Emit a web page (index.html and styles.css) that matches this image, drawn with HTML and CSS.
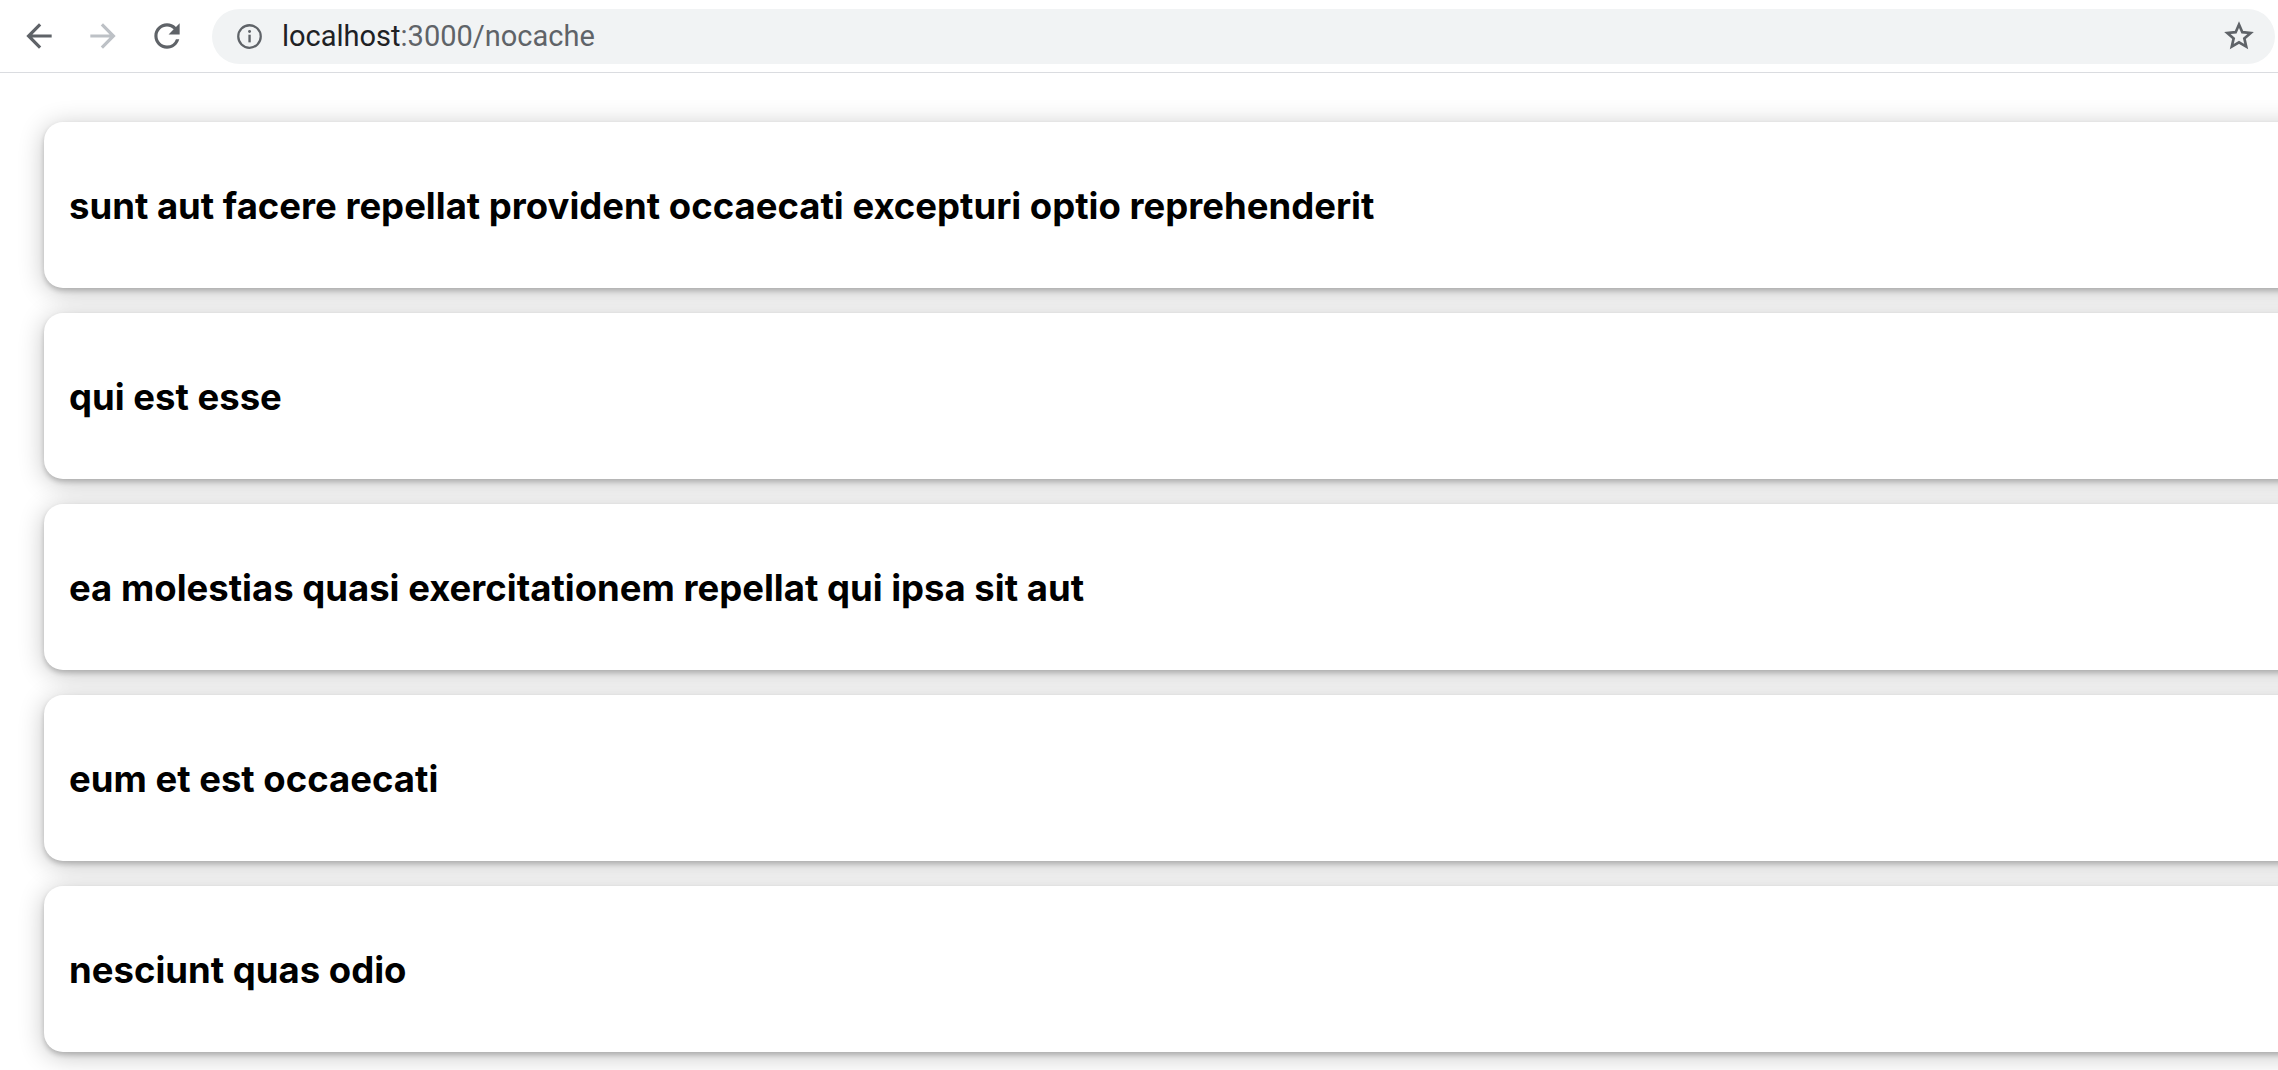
FILE: index.html
```html
<!DOCTYPE html>
<html lang="en">
<head>
<meta charset="utf-8">
<title>nocache</title>
<link rel="stylesheet" href="styles.css">
</head>
<body>
<header class="toolbar">
  <div class="nav">
    <span class="nav-btn">
      <svg viewBox="0 0 24 24" width="38" height="38"><path d="M20 11H7.83l5.59-5.59L12 4l-8 8 8 8 1.41-1.41L7.83 13H20v-2z" fill="#5f6368"/></svg>
    </span>
    <span class="nav-btn">
      <svg viewBox="0 0 24 24" width="38" height="38"><path d="M12 4l-1.41 1.41L16.17 11H4v2h12.17l-5.58 5.59L12 20l8-8z" fill="#bdc1c6"/></svg>
    </span>
    <span class="nav-btn">
      <svg viewBox="0 0 24 24" width="38" height="38"><path d="M17.65 6.35A7.958 7.958 0 0 0 12 4c-4.42 0-7.99 3.58-7.99 8s3.57 8 7.99 8c3.73 0 6.84-2.55 7.73-6h-2.08A5.99 5.99 0 0 1 12 18c-3.31 0-6-2.690-6-6s2.69-6 6-6c1.66 0 3.14.69 4.22 1.78L13 11h7V4l-2.35 2.35z" fill="#5f6368"/></svg>
    </span>
  </div>
  <div class="omnibox">
    <svg class="info" viewBox="0 0 24 24" width="27" height="27"><circle cx="12" cy="12" r="10" fill="none" stroke="#5f6368" stroke-width="2"/><rect x="11" y="10.4" width="2.1" height="6.8" fill="#5f6368"/><circle cx="12.05" cy="7.6" r="1.3" fill="#5f6368"/></svg>
    <span class="url"><span class="host">localhost</span><span class="path">:3000/nocache</span></span>
    <svg class="star" viewBox="0 0 24 24" width="32" height="32"><path d="M12 3.4l2.5 5.75 6.2.55-4.7 4.1 1.4 6.1L12 16.7l-5.4 3.2 1.4-6.1-4.7-4.1 6.2-.55z" fill="none" stroke="#5f6368" stroke-width="2" stroke-linejoin="miter"/></svg>
  </div>
</header>
<main class="list">
  <article class="card"><h2 class="title">sunt aut facere repellat provident occaecati excepturi optio reprehenderit</h2></article>
  <article class="card"><h2 class="title">qui est esse</h2></article>
  <article class="card"><h2 class="title">ea molestias quasi exercitationem repellat qui ipsa sit aut</h2></article>
  <article class="card"><h2 class="title">eum et est occaecati</h2></article>
  <article class="card"><h2 class="title">nesciunt quas odio</h2></article>
</main>
</body>
</html>
```

FILE: styles.css
```css
html, body {
  margin: 0;
  padding: 0;
  background: #ffffff;
  overflow: hidden;
}

body {
  font-family: Inter, "Liberation Sans", sans-serif;
  width: 2278px;
  height: 1070px;
}

.toolbar {
  height: 72px;
  border-bottom: 1px solid #dadce0;
  display: flex;
  align-items: center;
  box-sizing: content-box;
  background: #ffffff;
}

.nav {
  display: flex;
  align-items: center;
  padding-left: 20px;
  gap: 26px;
  width: 192px;
}

.nav-btn {
  display: flex;
  align-items: center;
  justify-content: center;
  width: 38px;
  height: 38px;
}

.omnibox {
  flex: 1;
  margin-right: 3px;
  height: 55px;
  border-radius: 28px;
  background: #f1f3f4;
  display: flex;
  align-items: center;
  padding-left: 24px;
  padding-right: 20px;
}

.info {
  flex: none;
}

.url {
  margin-left: 19px;
  font-family: Roboto, "Liberation Sans", sans-serif;
  font-size: 29px;
  flex: 1;
}

.host {
  color: #202124;
}

.path {
  color: #5f6368;
}

.star {
  flex: none;
}

.list {
  display: flex;
  flex-direction: column;
  gap: 25px;
  padding: 49px 0 0 44px;
  width: 2400px;
}

.card {
  height: 166px;
  display: flex;
  align-items: center;
  padding: 2px 25px 0;
  box-sizing: border-box;
  background: #ffffff;
  border-radius: 19px;
  box-shadow: 0 3px 5px rgba(0, 0, 0, 0.2), 0 4px 26px rgba(0, 0, 0, 0.24);
}

.title {
  margin: 0;
  font-size: 36.5px;
  font-weight: 700;
  color: #000000;
}
```
